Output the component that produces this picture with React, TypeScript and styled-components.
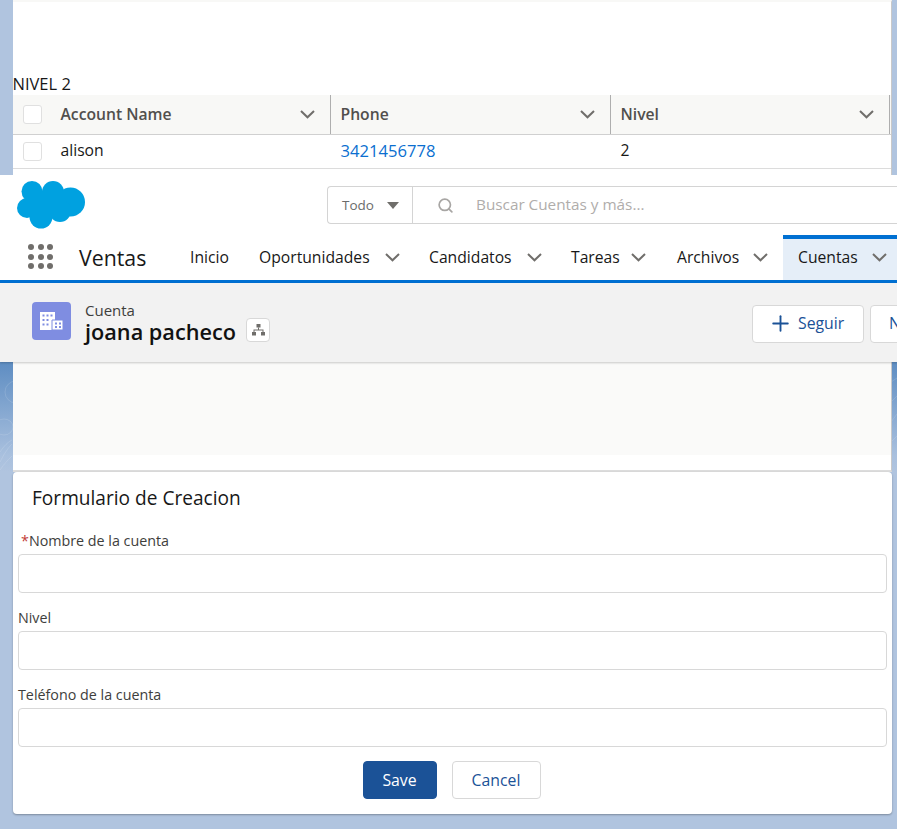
import React from 'react';
import styled, { createGlobalStyle } from 'styled-components';
import { Plus, Search } from 'lucide-react';

const GlobalStyle = createGlobalStyle`
  html, body {
    margin: 0;
    padding: 0;
    height: 829px;
    overflow: hidden;
    background: #b0c4df;
  }
  * {
    box-sizing: border-box;
  }
`;

const Page = styled.div`
  width: 897px;
  height: 829px;
  overflow: hidden;
  display: flex;
  flex-direction: column;
  font-family: 'Open Sans', 'Noto Sans', Arial, sans-serif;
  color: #181818;
`;

const TopCard = styled.section`
  height: 175px;
  margin: 0 5.5px 0 12.5px;
  padding-top: 2px;
  background: #fff;
  border-top: 2px solid #f8f8f6;
  border-right: 1px solid #c9c9c9;
  display: flex;
  flex-direction: column;
`;

const LevelTitle = styled.div`
  height: 22px;
  margin-top: 69px;
  font-size: 16.5px;
  line-height: 22px;
  color: #181818;
`;

const HeaderRow = styled.div`
  display: grid;
  grid-template-columns: 318px 280px 279px;
  height: 40px;
  background: #f8f8f6;
  border-bottom: 1px solid #d0d0d0;
`;

const HeaderCell = styled.div`
  display: flex;
  align-items: center;
  justify-content: space-between;
  padding: 0 15px 1px 10px;
  border-right: 1px solid #aeaeae;
  font-size: 15.7px;
  font-weight: 600;
  color: #514f4d;
`;

const CellLabel = styled.span`
  display: flex;
  align-items: center;
  gap: 19px;
`;

const Check = styled.span`
  width: 19px;
  height: 19px;
  background: #fff;
  border: 1px solid #e0e0e0;
  border-radius: 3px;
`;

const DataRow = styled.div`
  display: grid;
  grid-template-columns: 318px 280px 279px;
  height: 34px;
  border-bottom: 1px solid #dcdcdc;
  font-size: 15.7px;
`;

const DataCell = styled.div`
  display: flex;
  align-items: center;
  padding-left: 10px;
`;

const DataText = styled.span`
  padding-bottom: 3px;
`;

const PhoneLink = styled.a`
  padding-bottom: 3px;
  font-size: 16.6px;
  color: #0b6fd0;
  text-decoration: none;
`;

const GlobalHeader = styled.header`
  background: #fff;
  height: 108px;
  flex-shrink: 0;
`;

const SearchBar = styled.div`
  height: 60px;
  display: flex;
  align-items: flex-start;
  padding: 6px 0 0 17px;
`;

const Cloud = styled.svg`
  width: 68px;
  height: 48px;
  flex-shrink: 0;
  margin-right: 242px;
`;

const SearchBox = styled.div`
  display: flex;
  height: 38px;
  width: 640px;
  flex-shrink: 0;
  margin-top: 5px;
  background: #fff;
  border: 1px solid #d4d4d4;
  border-right: none;
  border-radius: 4px 0 0 4px;
`;

const Scope = styled.div`
  width: 85px;
  display: flex;
  align-items: center;
  gap: 13px;
  padding-left: 14px;
  border-right: 1px solid #d4d4d4;
  font-size: 13.5px;
  color: #6b6b6b;
`;

const Caret = styled.span`
  width: 0;
  height: 0;
  border-left: 6.5px solid transparent;
  border-right: 6.5px solid transparent;
  border-top: 7px solid #706e6b;
`;

const SearchField = styled.div`
  display: flex;
  align-items: center;
  gap: 22px;
  padding-left: 24px;
  font-size: 15.3px;
  color: #b0adab;
`;

const SearchText = styled.span`
  padding-bottom: 2px;
`;

const NavBar = styled.nav`
  height: 48px;
  display: flex;
  border-bottom: 3px solid #0070d2;
`;

const Waffle = styled.div`
  width: 25px;
  height: 25px;
  margin: 9px 26px 0 28px;
  display: grid;
  grid-template-columns: repeat(3, 6px);
  grid-template-rows: repeat(3, 6px);
  justify-content: space-between;
  align-content: space-between;
  flex-shrink: 0;
`;

const WaffleDot = styled.span`
  width: 6px;
  height: 6px;
  border-radius: 50%;
  background: #706e6b;
`;

const AppName = styled.div`
  width: 111px;
  flex-shrink: 0;
  font-size: 21.3px;
  line-height: 45px;
  color: #181818;
`;

const NavItem = styled.div<{ $w: number; $pad?: number; $active?: boolean }>`
  width: ${p => p.$w}px;
  height: 45px;
  flex-shrink: 0;
  display: flex;
  align-items: center;
  justify-content: space-between;
  font-size: 15.7px;
  color: #181818;
  padding: ${p => (p.$active ? '0 10px 5px 15px' : `0 ${p.$pad ?? 29}px 1px 0`)};
  background: ${p => (p.$active ? '#e5eef8' : 'transparent')};
  border-top: ${p => (p.$active ? '4px solid #0070d2' : 'none')};
`;

const Highlights = styled.div`
  height: 79px;
  flex-shrink: 0;
  display: flex;
  align-items: flex-start;
  padding: 19px 0 0 32px;
  background: #f2f2f2;
  box-shadow: 0 1px 2px rgba(0, 0, 0, 0.2);
  position: relative;
  z-index: 1;
`;

const EntityIcon = styled.div`
  width: 39px;
  height: 38px;
  border-radius: 4px;
  background: #7f8de1;
  display: flex;
  align-items: center;
  justify-content: center;
  margin-right: 14px;
  flex-shrink: 0;
`;

const EntityText = styled.div`
  width: 161px;
  margin-top: -1px;
  flex-shrink: 0;
`;

const EntityType = styled.div`
  font-size: 15px;
  line-height: 18px;
  color: #3e3e3c;
`;

const EntityName = styled.div`
  font-size: 21.7px;
  line-height: 25px;
  font-weight: 600;
  white-space: nowrap;
  color: #111;
`;

const HierarchyButton = styled.div`
  width: 24px;
  height: 24px;
  margin-top: 16px;
  background: #fff;
  border: 1px solid #d8d8d8;
  border-radius: 4px;
  display: flex;
  align-items: center;
  justify-content: center;
  flex-shrink: 0;
`;

const HeaderActions = styled.div`
  margin-left: 482px;
  margin-top: 3px;
  display: flex;
  gap: 6px;
  flex-shrink: 0;
`;

const HeaderButton = styled.div<{ $w: number; $pad: number }>`
  width: ${p => p.$w}px;
  height: 38px;
  display: flex;
  align-items: center;
  gap: 5px;
  padding: 0 0 2px ${p => p.$pad}px;
  background: #fff;
  border: 1px solid #d8d8d8;
  border-radius: 4px;
  font-size: 15.8px;
  color: #1b5297;
`;

const bandLines = encodeURIComponent(
  `<svg xmlns="http://www.w3.org/2000/svg" width="897" height="110" fill="none" stroke="#fff" stroke-opacity=".13">
    <circle cx="16" cy="30" r="11"/><ellipse cx="4" cy="65" rx="9" ry="8"/>
    <path d="M0 100c4-8 8-14 12-18M0 90c4-6 8-10 12-12M0 108c4-6 8-10 12-14"/>
    <path d="M891 40l6-6M891 60l6-8M891 80l6-6M891 20l6-4"/>
  </svg>`
);

const MiddleBand = styled.div`
  height: 110px;
  flex-shrink: 0;
  padding: 0 5.5px 0 12.5px;
  background-image: url("data:image/svg+xml,${bandLines}"),
    linear-gradient(180deg, #5e8dc2 0%, #a9c0de 85%, #b0c4df 100%);
`;

const BlankCard = styled.section`
  height: 110px;
  background: #fff;
  padding-bottom: 15px;
  border-bottom: 2px solid #dcdcdc;
  border-right: 1px solid #c9c9c9;
`;

const BlankFill = styled.div`
  height: 100%;
  background: #fafaf9;
`;

const FormCard = styled.section`
  height: 342px;
  margin: 0 5.5px 0 12.5px;
  padding: 0 4.5px 0 5.5px;
  background: #fff;
  border-radius: 4px;
  box-shadow: 0 1px 2px rgba(0, 0, 0, 0.3);
`;

const FormTitle = styled.h2`
  margin: 0;
  padding: 14px 0 0 14px;
  height: 54px;
  font-size: 19.1px;
  line-height: 24px;
  font-weight: 400;
  color: #181818;
`;

const Field = styled.div`
  height: 77px;
`;

const FieldLabel = styled.label`
  display: block;
  height: 28px;
  padding-top: 6px;
  font-size: 14.3px;
  line-height: 18px;
  color: #3e3e3c;
`;

const Required = styled.abbr`
  color: #c23934;
  margin: 0 0 0 3px;
  text-decoration: none;
`;

const TextInput = styled.input`
  display: block;
  width: 100%;
  height: 38.5px;
  background: #fff;
  border: 1px solid #d8d8d8;
  border-radius: 4px;
`;

const FormActions = styled.div`
  display: flex;
  justify-content: center;
  gap: 15px;
  margin-top: 4px;
  padding-right: 2px;
`;

const FormButton = styled.button<{ $primary?: boolean }>`
  width: ${p => (p.$primary ? '74px' : '89px')};
  height: 38px;
  padding: 0;
  font: inherit;
  font-size: 15.8px;
  border-radius: 4px;
  border: 1px solid ${p => (p.$primary ? '#1b5297' : '#d8d8d8')};
  background: ${p => (p.$primary ? '#1b5297' : '#fff')};
  color: ${p => (p.$primary ? '#fff' : '#1b5297')};
`;

const Chevron = () => (
  <svg width="15" height="9" viewBox="0 0 15 9" fill="none" stroke="#706e6b" strokeWidth="2">
    <path d="M1 1l6.500 6.300L14 1" />
  </svg>
);

const navItems = [
  { label: 'Oportunidades', w: 170, pad: 29 },
  { label: 'Candidatos', w: 142, pad: 29 },
  { label: 'Tareas', w: 106, pad: 31 },
  { label: 'Archivos', w: 106, pad: 15 },
];

const columns = ['Phone', 'Nivel'];

const App: React.FC = () => (
  <Page>
    <GlobalStyle />
    <TopCard>
      <LevelTitle>NIVEL 2</LevelTitle>
      <HeaderRow>
        <HeaderCell>
          <CellLabel>
            <Check />
            Account Name
          </CellLabel>
          <Chevron />
        </HeaderCell>
        {columns.map(name => (
          <HeaderCell key={name}>
            {name}
            <Chevron />
          </HeaderCell>
        ))}
      </HeaderRow>
      <DataRow>
        <DataCell>
          <CellLabel>
            <Check />
            <DataText>alison</DataText>
          </CellLabel>
        </DataCell>
        <DataCell>
          <PhoneLink href="#">3421456778</PhoneLink>
        </DataCell>
        <DataCell>
          <DataText>2</DataText>
        </DataCell>
      </DataRow>
    </TopCard>

    <GlobalHeader>
      <SearchBar>
        <Cloud viewBox="0 0 68 48">
          <g fill="#00a1e0">
            <circle cx="15" cy="10.500" r="10.500" />
            <circle cx="36" cy="11" r="11" />
            <circle cx="53.500" cy="21" r="14.500" />
            <circle cx="10" cy="27" r="10" />
            <circle cx="24" cy="36" r="11.500" />
            <circle cx="43" cy="30" r="11" />
            <rect x="12" y="10" width="36" height="24" />
          </g>
        </Cloud>
        <SearchBox>
          <Scope>
            Todo
            <Caret />
          </Scope>
          <SearchField>
            <Search size={17} color="#a8a6a4" strokeWidth={2.4} />
            <SearchText>Buscar Cuentas y más...</SearchText>
          </SearchField>
        </SearchBox>
      </SearchBar>

      <NavBar>
        <Waffle>
          {Array.from({ length: 9 }, (_, i) => (
            <WaffleDot key={i} />
          ))}
        </Waffle>
        <AppName>Ventas</AppName>
        <NavItem $w={69}>Inicio</NavItem>
        {navItems.map(item => (
          <NavItem key={item.label} $w={item.w} $pad={item.pad}>
            {item.label}
            <Chevron />
          </NavItem>
        ))}
        <NavItem $w={114} $active>
          Cuentas
          <Chevron />
        </NavItem>
      </NavBar>
    </GlobalHeader>

    <Highlights>
      <EntityIcon>
        <svg width="23" height="18" viewBox="0 0 23 18" fill="#fff">
          <path d="M0 0h15v18H0z" />
          <path d="M12 8h11v10H12z" stroke="#7f8de1" strokeWidth="1" />
          <g fill="#7f8de1">
            <path d="M2.500 2.500h2v2h-2zM6.500 2.500h2v2h-2zM10.500 2.500h2v2h-2zM2.500 7h2v2h-2zM6.500 7h2v2h-2zM2.500 11.500h2v2h-2zM6.500 11.500h2v2h-2z" />
            <path d="M15 10.500h2v2h-2zM19 10.500h2v2h-2zM15 14h2v2h-2zM19 14h2v2h-2z" />
          </g>
        </svg>
      </EntityIcon>
      <EntityText>
        <EntityType>Cuenta</EntityType>
        <EntityName>joana pacheco</EntityName>
      </EntityText>
      <HierarchyButton>
        <svg width="13" height="12" viewBox="0 0 13 12" fill="#706e6b">
          <path d="M4.500 0h4v3.600h-4zM0 8h4v3.600H0zM9 8h4v3.600H9z" />
          <path d="M6 3.600h1v2h4.500V8h-1V6.600H2.500V8h-1V5.600H6z" />
        </svg>
      </HierarchyButton>
      <HeaderActions>
        <HeaderButton $w={112} $pad={15}>
          <Plus size={25} color="#1b5297" strokeWidth={1.8} />
          Seguir
        </HeaderButton>
        <HeaderButton $w={60} $pad={18}>
          Nuevo
        </HeaderButton>
      </HeaderActions>
    </Highlights>

    <MiddleBand>
      <BlankCard>
        <BlankFill />
      </BlankCard>
    </MiddleBand>

    <FormCard>
      <FormTitle>Formulario de Creacion</FormTitle>
      <Field>
        <FieldLabel>
          <Required>*</Required>Nombre de la cuenta
        </FieldLabel>
        <TextInput />
      </Field>
      <Field>
        <FieldLabel>Nivel</FieldLabel>
        <TextInput />
      </Field>
      <Field>
        <FieldLabel>Teléfono de la cuenta</FieldLabel>
        <TextInput />
      </Field>
      <FormActions>
        <FormButton $primary>Save</FormButton>
        <FormButton>Cancel</FormButton>
      </FormActions>
    </FormCard>
  </Page>
);

export default App;
